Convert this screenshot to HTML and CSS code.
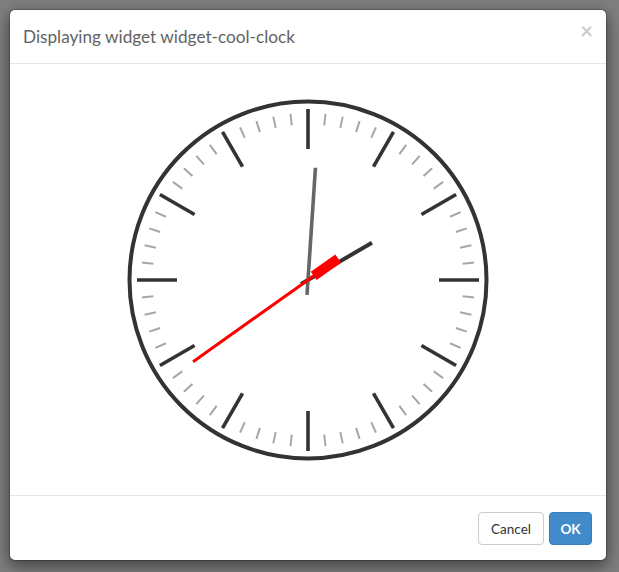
FILE: index.html
```html
<!DOCTYPE html>
<html>
<head>
<meta charset="utf-8">
<link rel="stylesheet" href="styles.css">
</head>
<body>
<div class="modal">
  <div class="modal-header">
    <h4 class="modal-title">Displaying widget widget-cool-clock</h4>
    <span class="close">×</span>
  </div>
  <div class="modal-body">
    <svg class="clock" width="380" height="380" viewBox="-190 -190 380 380">
      <defs>
        <line id="maj" x1="0" y1="-171" x2="0" y2="-131" stroke="#333" stroke-width="3.6"/>
        <line id="min" x1="0" y1="-167" x2="0" y2="-155.5" stroke="#a6a6a6" stroke-width="2"/>
      </defs>
      <circle cx="0" cy="0" r="178.5" fill="#fff" stroke="#333" stroke-width="4"/>
      <g>
        <use href="#maj" transform="rotate(0)"/>
        <use href="#min" transform="rotate(6)"/>
        <use href="#min" transform="rotate(12)"/>
        <use href="#min" transform="rotate(18)"/>
        <use href="#min" transform="rotate(24)"/>
        <use href="#maj" transform="rotate(30)"/>
        <use href="#min" transform="rotate(36)"/>
        <use href="#min" transform="rotate(42)"/>
        <use href="#min" transform="rotate(48)"/>
        <use href="#min" transform="rotate(54)"/>
        <use href="#maj" transform="rotate(60)"/>
        <use href="#min" transform="rotate(66)"/>
        <use href="#min" transform="rotate(72)"/>
        <use href="#min" transform="rotate(78)"/>
        <use href="#min" transform="rotate(84)"/>
        <use href="#maj" transform="rotate(90)"/>
        <use href="#min" transform="rotate(96)"/>
        <use href="#min" transform="rotate(102)"/>
        <use href="#min" transform="rotate(108)"/>
        <use href="#min" transform="rotate(114)"/>
        <use href="#maj" transform="rotate(120)"/>
        <use href="#min" transform="rotate(126)"/>
        <use href="#min" transform="rotate(132)"/>
        <use href="#min" transform="rotate(138)"/>
        <use href="#min" transform="rotate(144)"/>
        <use href="#maj" transform="rotate(150)"/>
        <use href="#min" transform="rotate(156)"/>
        <use href="#min" transform="rotate(162)"/>
        <use href="#min" transform="rotate(168)"/>
        <use href="#min" transform="rotate(174)"/>
        <use href="#maj" transform="rotate(180)"/>
        <use href="#min" transform="rotate(186)"/>
        <use href="#min" transform="rotate(192)"/>
        <use href="#min" transform="rotate(198)"/>
        <use href="#min" transform="rotate(204)"/>
        <use href="#maj" transform="rotate(210)"/>
        <use href="#min" transform="rotate(216)"/>
        <use href="#min" transform="rotate(222)"/>
        <use href="#min" transform="rotate(228)"/>
        <use href="#min" transform="rotate(234)"/>
        <use href="#maj" transform="rotate(240)"/>
        <use href="#min" transform="rotate(246)"/>
        <use href="#min" transform="rotate(252)"/>
        <use href="#min" transform="rotate(258)"/>
        <use href="#min" transform="rotate(264)"/>
        <use href="#maj" transform="rotate(270)"/>
        <use href="#min" transform="rotate(276)"/>
        <use href="#min" transform="rotate(282)"/>
        <use href="#min" transform="rotate(288)"/>
        <use href="#min" transform="rotate(294)"/>
        <use href="#maj" transform="rotate(300)"/>
        <use href="#min" transform="rotate(306)"/>
        <use href="#min" transform="rotate(312)"/>
        <use href="#min" transform="rotate(318)"/>
        <use href="#min" transform="rotate(324)"/>
        <use href="#maj" transform="rotate(330)"/>
        <use href="#min" transform="rotate(336)"/>
        <use href="#min" transform="rotate(342)"/>
        <use href="#min" transform="rotate(348)"/>
        <use href="#min" transform="rotate(354)"/>
      </g>
      <line x1="0" y1="8" x2="0" y2="-74" stroke="#333" stroke-width="4" transform="rotate(59.8)"/>
      <line x1="0" y1="15" x2="0" y2="-112.5" stroke="#666" stroke-width="3.6" transform="rotate(3.8)"/>
      <g transform="rotate(54.6)">
        <line x1="0" y1="-7" x2="0" y2="141" stroke="#f00" stroke-width="3"/>
        <line x1="0" y1="-7" x2="0" y2="-37" stroke="#f00" stroke-width="10"/>
      </g>
    </svg>
  </div>
  <div class="modal-footer">
    <button class="btn btn-default">Cancel</button>
    <button class="btn btn-primary">OK</button>
  </div>
</div>
</body>
</html>
```

FILE: styles.css
```css
html, body {
  margin: 0;
  padding: 0;
}
body {
  background: #7f7f7f;
  padding: 9px 12px 12px 9px;
  font-family: "Lato", "Open Sans", sans-serif;
}
.modal {
  width: 598px;
  box-sizing: border-box;
  background: #fff;
  border: 1px solid rgba(0,0,0,0.2);
  border-radius: 6px;
  box-shadow: 0 5px 15px rgba(0,0,0,0.5);
  background-clip: padding-box;
}
.modal-header {
  display: flex;
  align-items: center;
  justify-content: space-between;
  height: 54px;
  box-sizing: border-box;
  padding: 0 15px 0 13px;
  border-bottom: 1px solid #e5e5e5;
}
.modal-title {
  margin: 0;
  font-size: 17.2px;
  font-weight: 400;
  color: #636363;
  line-height: 25px;
}
.close {
  font-size: 22px;
  font-weight: 700;
  line-height: 1;
  color: #000;
  opacity: 0.2;
  margin-bottom: 11px;
  margin-right: -2px;
}
.modal-body {
  height: 431px;
  display: flex;
  align-items: center;
  justify-content: center;
}
.clock {
  display: block;
}
.modal-footer {
  border-top: 1px solid #e5e5e5;
  padding: 16px 14px 15px 15px;
  display: flex;
  justify-content: flex-end;
  gap: 5px;
}
.btn {
  font-family: "Lato", "Open Sans", sans-serif;
  font-size: 13.5px;
  height: 33px;
  padding: 0 12px;
  border-radius: 4px;
  border: 1px solid transparent;
  cursor: pointer;
}
.btn-default {
  background: #fff;
  border-color: #ccc;
  color: #333;
  width: 66px;
}
.btn-primary {
  background: #428bca;
  border-color: #357ebd;
  color: #fff;
  font-weight: 700;
  width: 43px;
  padding: 0;
}
```
